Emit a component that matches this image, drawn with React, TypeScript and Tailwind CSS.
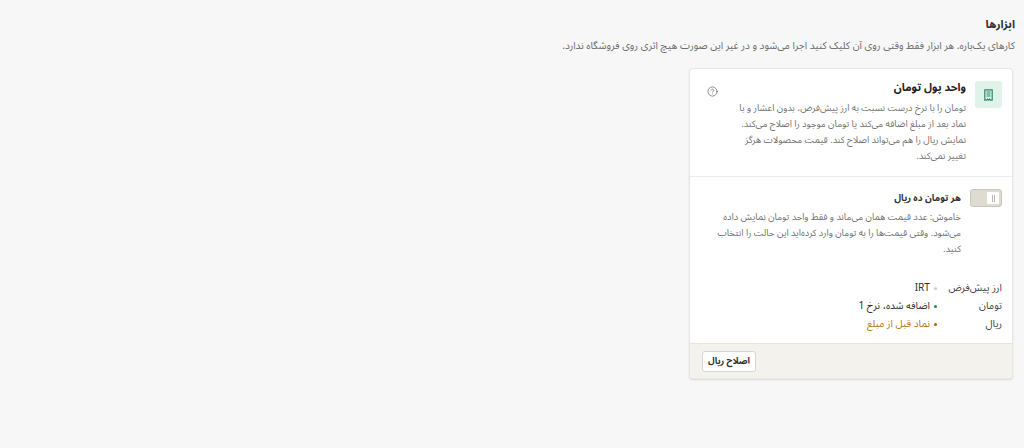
import { CircleHelp } from "lucide-react";

const rows = [
  { label: "ارز پیش‌فرض", value: "IRT", dot: "bg-[#c9cccf]", text: "text-[#303030]" },
  { label: "تومان", value: "اضافه شده، نرخ 1", dot: "bg-[#2e8b3e]", text: "text-[#303030]" },
  { label: "ریال", value: "نماد قبل از مبلغ", dot: "bg-[#a8660f]", text: "text-[#b5780f]" },
];

export default function App() {
  return (
    <div
      dir="rtl"
      className="min-h-screen bg-[#f7f7f7] px-[9px] pt-[16px] font-['Noto_Sans_Arabic','Inter',sans-serif] text-[#303030]"
    >
      <h1 className="text-[11.25px] leading-[18px] font-bold text-[#303030]">ابزارها</h1>
      <p className="mt-[4px] text-[10.15px] leading-[16px] text-[#6b6b6b]">
        کارهای یک‌باره. هر ابزار فقط وقتی روی آن کلیک کنید اجرا می‌شود و در غیر این صورت هیچ اثری روی فروشگاه ندارد.
      </p>

      <div className="mt-[14px] mr-[2px] w-[324px] overflow-hidden rounded-[4px] border border-[#e8e8e8] bg-white shadow-[0_1px_2px_rgba(0,0,0,0.12)]">
        {/* Currency unit */}
        <div className="flex gap-[9px] border-b border-[#ebebeb] pt-[12px] pr-[10px] pb-[12px] pl-[11px]">
          <div className="flex h-[27px] w-[27px] shrink-0 items-center justify-center rounded-[3px] bg-[#dff3ea]">
            <svg width="9" height="12" viewBox="0 0 9 12" fill="none" stroke="#2a8a66" strokeWidth="1.2">
              <path d="M.8.8h7.4v10.4H6.6L5.5 10.2 4.5 11.2 3.5 10.2 2.4 11.2H.8z" />
              <path d="M2.5 3h4M2.5 5h4M2.5 7h4" />
            </svg>
          </div>
          <div className="min-w-0 flex-1">
            <div className="flex items-start justify-between">
              <h2 className="text-[10.9px] leading-[14px] font-bold text-[#202020]">واحد پول تومان</h2>
              <CircleHelp className="mt-[5px] ml-[6px] h-[11px] w-[11px] text-[#5f5f5f]" strokeWidth={1.5} />
            </div>
            <p className="mt-[3px] w-[230px] text-[9.3px] leading-[16px] text-[#707070]">
              تومان را با نرخ درست نسبت به ارز پیش‌فرض، بدون اعشار و با نماد بعد از مبلغ اضافه می‌کند یا تومان موجود را اصلاح می‌کند. نمایش ریال را هم می‌تواند اصلاح کند. قیمت محصولات هرگز تغییر نمی‌کند.
            </p>
          </div>
        </div>

        {/* Ten rial toggle */}
        <div className="flex gap-[9px] pt-[12px] pr-[10px] pl-[11px]">
          <div className="flex h-[18px] w-[32px] shrink-0 items-center justify-start rounded-[3px] border border-[#c9c6ba] bg-[#dedbd0] p-[2px]">
            <div className="flex h-[12px] w-[12px] items-center justify-center gap-[1px] rounded-[1px] bg-white">
              <span className="h-[7px] w-[1px] bg-[#b5b5b5]" />
              <span className="h-[7px] w-[1px] bg-[#b5b5b5]" />
            </div>
          </div>
          <div className="min-w-0 flex-1">
            <h3 className="mt-[2px] text-[9.3px] leading-[14px] font-bold text-[#303030]">هر تومان ده ریال</h3>
            <p className="mt-[4px] w-[245px] text-[9.3px] leading-[16px] text-[#707070]">
              خاموش: عدد قیمت همان می‌ماند و فقط واحد تومان نمایش داده می‌شود. وقتی قیمت‌ها را به تومان وارد کرده‌اید این حالت را انتخاب کنید.
            </p>
          </div>
        </div>

        {/* Status rows */}
        <div className="mt-[23px] flex flex-col gap-[2px] pr-[10px] pl-[11px] pb-[11px]">
          {rows.map((row) => (
            <div key={row.label} className="flex h-[16px] items-center text-[10.15px] leading-[16px]">
              <span className="w-[65px] shrink-0 text-[#404040]">{row.label}</span>
              <span className={`ml-[4px] h-[3px] w-[3px] rounded-full ${row.dot}`} />
              <span className={row.text}>{row.value}</span>
            </div>
          ))}
        </div>

        <div className="flex border-t border-[#e8e6dc] bg-[#f3f2ec] px-[12px] pt-[7px] pb-[6px]">
          <button className="mr-auto h-[21px] w-[54px] whitespace-nowrap rounded-[3px] border border-[#d5d5d5] bg-white text-[9px] font-bold text-[#303030]">
            اصلاح ریال
          </button>
        </div>
      </div>
    </div>
  );
}
